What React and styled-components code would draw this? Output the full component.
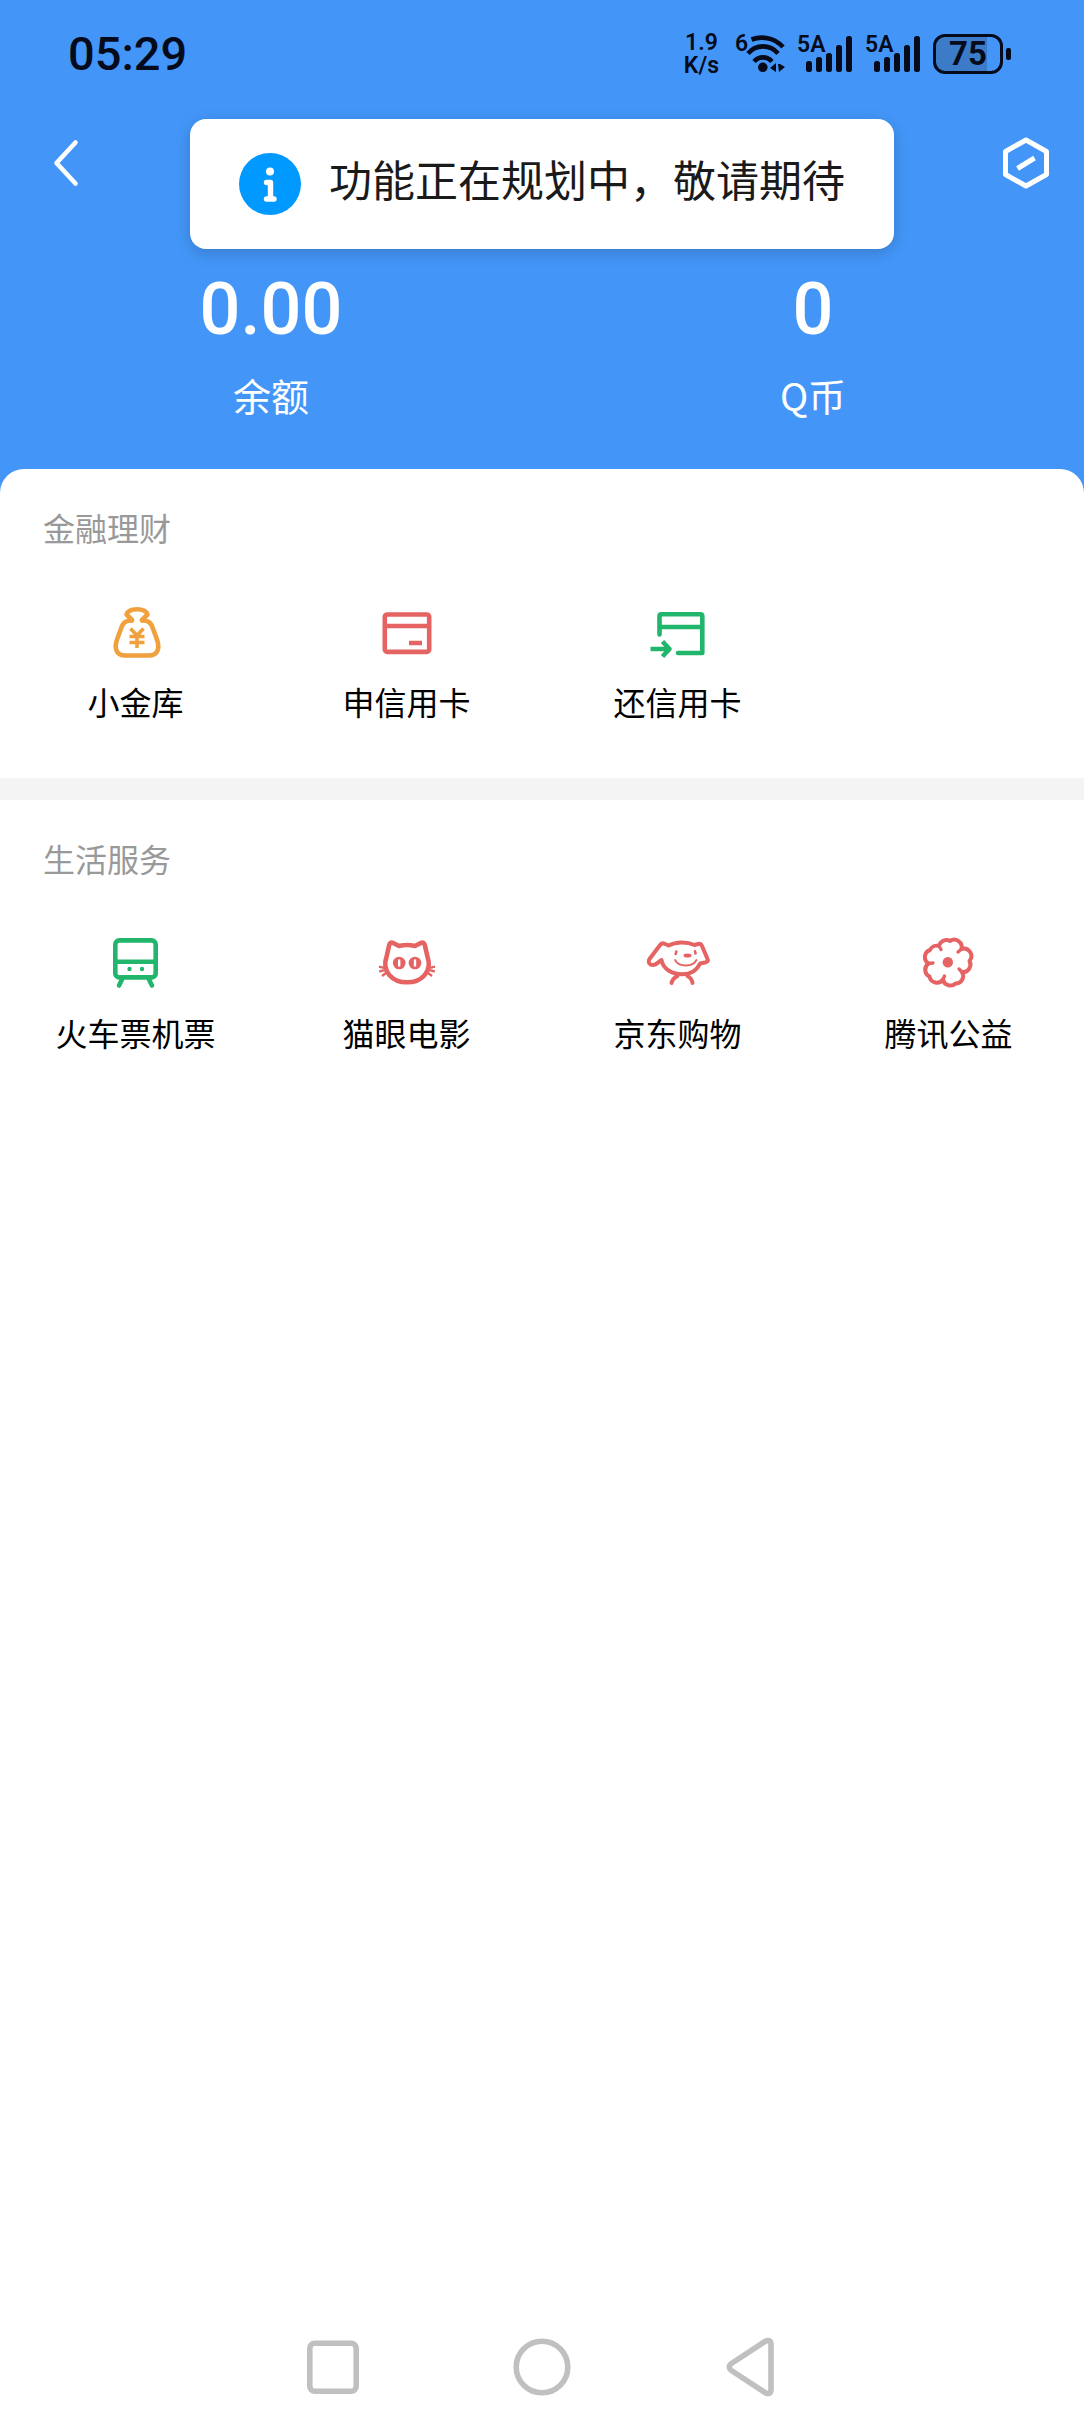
import styled, { createGlobalStyle } from 'styled-components'

const colors = {
  blue: '#4396f8',
  green: '#22b56c',
  red: '#e66363',
  orange: '#f0a03c',
  system: '#060b1c',
  nav: '#c0c0c0',
}

const GlobalStyle = createGlobalStyle`
  * {
    box-sizing: border-box;
  }

  body {
    margin: 0;
    background: #fff;
    font-family: Roboto, 'Noto Sans CJK SC', sans-serif;
  }

  button {
    padding: 0;
    border: 0;
    background: none;
    color: inherit;
    font: inherit;
    cursor: pointer;
  }
`

const Page = styled.div`
  position: relative;
  display: flex;
  flex-direction: column;
  min-height: 100vh;
  background: ${colors.blue};
`

const StatusBar = styled.div`
  display: flex;
  align-items: center;
  justify-content: space-between;
  height: 108px;
  padding: 0 73px 0 68px;
  color: ${colors.system};
`

const Clock = styled.time`
  font-size: 47px;
  font-weight: 500;
  line-height: 56px;
`

const StatusIcons = styled.div`
  display: flex;
  align-items: center;
  gap: 12px;

  text {
    font-weight: 600;
    font-size: 23px;
  }
`

const Speed = styled.div`
  font-size: 23px;
  font-weight: 600;
  line-height: 23px;
  text-align: center;
`

const Battery = styled.div`
  display: flex;
  align-items: center;
  gap: 3px;

  &::after {
    content: '';
    width: 5px;
    height: 12px;
    border-radius: 2px;
    background: ${colors.system};
  }
`

const BatteryBody = styled.div`
  width: 70px;
  height: 40px;
  border: 3px solid ${colors.system};
  border-radius: 12px;
  background: linear-gradient(to right, #3b7bc8 ${(props) => props.$level}%, transparent 0);
  font-size: 33px;
  font-weight: 700;
  line-height: 34px;
  text-align: center;
`

const TopBar = styled.header`
  display: flex;
  align-items: center;
  justify-content: space-between;
  height: 110px;
  padding: 0 26px;
`

const IconButton = styled.button`
  display: flex;
  width: 64px;
  height: 64px;
`

const Balances = styled.div`
  display: grid;
  grid-template-columns: 1fr 1fr;
  padding: 48px 0;
  color: #fff;
  text-align: center;
`

const Amount = styled.div`
  font-size: 72px;
  font-weight: 500;
  line-height: 88px;
`

const AmountLabel = styled.div`
  margin-top: 15px;
  font-family: 'Noto Sans CJK SC', sans-serif;
  font-size: 38px;
  line-height: 52px;
`

const Panel = styled.main`
  flex: 1;
  border-radius: 24px 24px 0 0;
  background: #fff;
  overflow: hidden;
`

const Section = styled.section`
  padding: 37px 0 52px;

  & + & {
    border-top: 22px solid #f4f4f4;
  }
`

const SectionTitle = styled.h2`
  margin: 0 43px;
  color: #999;
  font-size: 32px;
  font-weight: 400;
  line-height: 48px;
`

const ServiceGrid = styled.div`
  display: grid;
  grid-template-columns: repeat(4, 1fr);
  margin-top: 46px;
`

const Service = styled.button`
  display: flex;
  flex-direction: column;
  align-items: center;
  gap: 18px;
`

const ServiceName = styled.span`
  color: #000;
  font-size: 32px;
  line-height: 44px;
`

const Toast = styled.div`
  position: absolute;
  top: 119px;
  left: 50%;
  display: flex;
  align-items: center;
  gap: 28px;
  height: 130px;
  padding: 0 49px;
  border-radius: 16px;
  background: #fff;
  box-shadow: 0 4px 16px rgba(0, 0, 0, 0.18);
  transform: translateX(-50%);
`

const ToastText = styled.span`
  padding-bottom: 4px;
  color: #1a1a1a;
  font-size: 43px;
  line-height: 60px;
  white-space: nowrap;
`

const NavBar = styled.nav`
  display: flex;
  justify-content: center;
  gap: 145px;
  padding: 0 0 13px;
  background: #fff;
`

const Stroke = ({ color, width = 4.6, children }) => (
  <svg
    width="64"
    height="64"
    viewBox="0 0 64 64"
    fill="none"
    stroke={color}
    strokeWidth={width}
    strokeLinecap="round"
    strokeLinejoin="round"
    aria-hidden="true"
  >
    {children}
  </svg>
)

const MoneyBagIcon = () => (
  <Stroke color={colors.orange}>
    <path d="M28 20.5C22 20.5 20 22 18 26L13.2 39C9.5 49 13 55.5 21 55.5H45C53 55.5 56.5 49 52.8 39L48 26C46 22 44 20.5 38 20.5" />
    <path d="M28 20L22.5 14.5C24 10 29 9.3 33 9.3S42 10 43.5 14.5L38 20" />
    <path d="M26.5 28.5L33 35.5L39.5 28.5M25.5 36.5H40.5M25.5 42.5H40.5M33 36V48" strokeWidth="3.6" strokeLinecap="butt" />
  </Stroke>
)

const CardIcon = () => (
  <Stroke color={colors.red}>
    <rect x="9.8" y="14.5" width="44.4" height="37.4" rx="2.5" />
    <path d="M10 26H54M34 43H47" strokeLinecap="butt" />
  </Stroke>
)

const RepayIcon = () => (
  <Stroke color={colors.green}>
    <path d="M13.5 34.5V16.3Q13.5 14.3 15.5 14.3H54.3Q56.3 14.3 56.3 16.3V53H32" />
    <path d="M14 27H56" />
    <path d="M4.5 49H23M16.5 41.5L23.5 49L16.5 56.5" strokeLinecap="butt" />
  </Stroke>
)

const TrainIcon = () => (
  <Stroke color={colors.green}>
    <rect x="11.3" y="9.4" width="40.4" height="37" rx="4" />
    <path d="M12 30.7H51M18 48.5L15 54.5M45 48.5L48 54.5" />
    <circle cx="25.5" cy="38" r="2.2" fill={colors.green} stroke="none" />
    <circle cx="38" cy="38" r="2.2" fill={colors.green} stroke="none" />
  </Stroke>
)

const CatIcon = () => (
  <Stroke color={colors.red}>
    <path d="M14.2 14Q15 10.8 18.2 12L24 15Q32 13 40 15L45.8 12Q49 10.8 49.8 14L52.3 25C58 41 46 51.3 32 51.3S6 41 11.7 25Z" />
    <g fill={colors.red} stroke="none">
      <circle cx="24.2" cy="32" r="6.3" />
      <circle cx="40" cy="32" r="6.3" />
    </g>
    <path d="M24.2 29.5V34.5M40 29.5V34.5" stroke="#fff" strokeWidth="2.4" />
    <path
      d="M4 35.7L9 36.8M4.2 40.5L9.5 39.2M7 45L11 42M60 35.7L55 36.8M59.8 40.5L54.5 39.2M57 45L53 42"
      strokeWidth="2.4"
      strokeLinecap="butt"
    />
  </Stroke>
)

const DogIcon = () => (
  <Stroke color={colors.red} width={4}>
    <path d="M22.5 14.5L18 12.5Q16 12 14.5 13.5L3.5 28C1.5 31.5 4 34 7 34C11 34 13 30 15.5 29C17 38 26 43.3 36 43.3C45 43.3 51 39 54 32.5L59 31.5Q63 30.5 61.5 28L56 15Q55 12 52 13L48.5 14C41 10.5 30 10.5 22.5 14.5Z" />
    <path d="M31.5 45Q26.5 47.5 25.5 52M41.5 45Q46 47.5 46.5 52" />
    <ellipse cx="41.5" cy="24.5" rx="4" ry="2.1" fill={colors.red} stroke="none" />
    <path d="M30.3 20.5L29.7 23M49 20.3L49.5 22.5" strokeWidth="2.6" />
    <path d="M29 29C31 33 35 34.5 40 34.5C45 34.5 48.5 33 50.5 29" strokeWidth="1.8" />
  </Stroke>
)

const FlowerIcon = () => (
  <Stroke color={colors.red} width={4}>
    <path d="M22 15A7.5 7.5 0 0 1 33 10A7.5 7.5 0 0 1 44.5 18A7.5 7.5 0 0 1 52.5 30A7.5 7.5 0 0 1 45 41A7.5 7.5 0 0 1 38.5 52.5A7.5 7.5 0 0 1 26 48.5A7.5 7.5 0 0 1 12.5 45.5A7.5 7.5 0 0 1 11.5 32.5A7.5 7.5 0 0 1 13 19A7.5 7.5 0 0 1 22 15Z" />
    <path d="M22 15L24 18.5M44.5 18L41 21M45 41L42 38M26 48.5L27.5 45M11.5 32.5L16 32" strokeWidth="3.4" />
    <circle cx="30.8" cy="31.3" r="5.2" fill={colors.red} stroke="none" />
  </Stroke>
)

const WifiIcon = () => (
  <svg width="54" height="68" viewBox="0 -12 54 68" fill="none" stroke="currentColor" strokeWidth="4.6" aria-hidden="true">
    <text x="4" y="19" fill="currentColor" stroke="none">6</text>
    <path d="M20.5 7.5C30 4 43 5 52 15M17 21.5C25 12 39 12 47 21.5M23 29.5C28 24 36 24 41 29.5" />
    <circle cx="31.8" cy="35.3" r="4.8" fill="currentColor" stroke="none" />
    <path d="M39 36L45 31V40ZM47 32H49L54 35L48 40Z" fill="currentColor" stroke="none" />
  </svg>
)

const SignalIcon = () => (
  <svg width="56" height="68" viewBox="0 -12 56 68" fill="currentColor" aria-hidden="true">
    <text x="0" y="20">5A</text>
    <rect x="9" y="29" width="6" height="11" rx="2.5" />
    <rect x="19" y="25" width="6" height="15" rx="2.5" />
    <rect x="29" y="21" width="6" height="19" rx="2.5" />
    <rect x="39" y="13" width="6" height="27" rx="2.5" />
    <rect x="49" y="4" width="6" height="36" rx="2.5" />
  </svg>
)

const InfoIcon = () => (
  <svg width="62" height="62" viewBox="0 0 62 62" aria-hidden="true">
    <circle cx="31" cy="31" r="31" fill="#0099ff" />
    <circle cx="31" cy="18.5" r="4" fill="#fff" />
    <path
      d="M27.5 29.5H31.5V46M27.5 46H35"
      fill="none"
      stroke="#fff"
      strokeWidth="5.4"
      strokeLinecap="round"
      strokeLinejoin="round"
    />
  </svg>
)

const balances = [
  { label: '余额', value: '0.00' },
  { label: 'Q币', value: '0' },
]

const sections = [
  {
    title: '金融理财',
    services: [
      { name: '小金库', Icon: MoneyBagIcon },
      { name: '申信用卡', Icon: CardIcon },
      { name: '还信用卡', Icon: RepayIcon },
    ],
  },
  {
    title: '生活服务',
    services: [
      { name: '火车票机票', Icon: TrainIcon },
      { name: '猫眼电影', Icon: CatIcon },
      { name: '京东购物', Icon: DogIcon },
      { name: '腾讯公益', Icon: FlowerIcon },
    ],
  },
]

function App() {
  return (
    <Page lang="zh-CN">
      <GlobalStyle />

      <StatusBar>
        <Clock>05:29</Clock>
        <StatusIcons>
          <Speed>
            1.9
            <br />
            K/s
          </Speed>
          <WifiIcon />
          <SignalIcon />
          <SignalIcon />
          <Battery>
            <BatteryBody $level={80}>75</BatteryBody>
          </Battery>
        </StatusIcons>
      </StatusBar>

      <TopBar>
        <IconButton type="button" aria-label="返回">
          <Stroke color="#fff" width={4.6}>
            <path d="M49.5 11.5L30.5 32L49.5 52.5" />
          </Stroke>
        </IconButton>
        <IconButton type="button" aria-label="设置">
          <Stroke color="#fff" width={5}>
            <path d="M32 9L52.5 20.5V43.5L32 55L11.5 43.5V20.5Z" />
            <path d="M23.5 37.5L40.5 27" strokeLinecap="butt" />
          </Stroke>
        </IconButton>
      </TopBar>

      <Balances>
        {balances.map(({ label, value }) => (
          <div key={label}>
            <Amount>{value}</Amount>
            <AmountLabel>{label}</AmountLabel>
          </div>
        ))}
      </Balances>

      <Panel>
        {sections.map(({ title, services }) => (
          <Section key={title}>
            <SectionTitle>{title}</SectionTitle>
            <ServiceGrid>
              {services.map(({ name, Icon }) => (
                <Service key={name} type="button">
                  <Icon />
                  <ServiceName>{name}</ServiceName>
                </Service>
              ))}
            </ServiceGrid>
          </Section>
        ))}
      </Panel>

      <NavBar>
        <IconButton type="button" aria-label="最近任务">
          <Stroke color={colors.nav} width={5.6}>
            <rect x="8.8" y="8.3" width="46.4" height="48" rx="5" />
          </Stroke>
        </IconButton>
        <IconButton type="button" aria-label="主屏幕">
          <Stroke color={colors.nav} width={5.6}>
            <circle cx="32" cy="32" r="25.8" />
          </Stroke>
        </IconButton>
        <IconButton type="button" aria-label="后退">
          <Stroke color={colors.nav} width={5.6}>
            <path d="M46.6 6.1L12.4 28.5Q8 32 12.4 35.5L46.6 57.9Q51.6 60 52 55V9Q51.6 4 46.6 6.1Z" />
          </Stroke>
        </IconButton>
      </NavBar>

      <Toast role="status">
        <InfoIcon />
        <ToastText>功能正在规划中，敬请期待</ToastText>
      </Toast>
    </Page>
  )
}

export default App
